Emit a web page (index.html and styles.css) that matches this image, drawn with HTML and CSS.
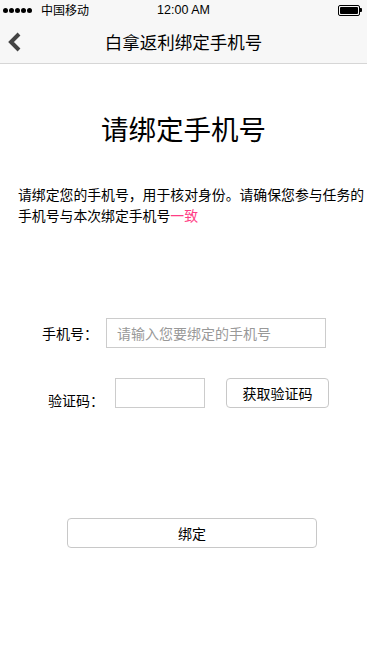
FILE: index.html
```html
<!DOCTYPE html>
<html lang="zh-CN">
<head>
    <meta charset="UTF-8">
    <meta name="viewport" content="width=device-width, initial-scale=1.0">
    <title>白拿返利绑定手机号</title>
    <link rel="stylesheet" href="styles.css">
</head>
<body>

    <div class="status-bar">
        <div class="status-left">
            <span class="signal">
                <i></i><i></i><i></i><i></i><i></i>
            </span>
            <span class="carrier">中国移动</span>
        </div>
        <div class="status-time">12:00 AM</div>
        <div class="status-right">
            <span class="battery"><span class="battery-level"></span></span>
            <span class="battery-tip"></span>
        </div>
    </div>

    <header class="nav">
        <a class="nav-back" href="#">
            <svg width="16" height="20" viewBox="0 0 16 20">
                <path d="M12 2 L4 10 L12 18" fill="none" stroke="#444" stroke-width="4" stroke-linejoin="miter"/>
            </svg>
        </a>
        <h2 class="nav-title">白拿返利绑定手机号</h2>
    </header>

    <main class="content">
        <h1 class="page-title">请绑定手机号</h1>
        <div class="intro">
            <span class="intro-line">请绑定您的手机号，用于核对身份。请确保您参与任务的</span>
            <span class="intro-line"><span>手机号与本次绑定手机号</span><span class="hl">一致</span></span>
        </div>

        <div class="form-row row-phone">
            <label class="form-label">手机号：</label>
            <input class="form-input input-phone" type="text" placeholder="请输入您要绑定的手机号">
        </div>

        <div class="form-row row-code">
            <label class="form-label label-code">验证码：</label>
            <input class="form-input input-code" type="text">
            <button class="btn btn-code">获取验证码</button>
        </div>

        <div class="bind-wrap">
            <button class="btn btn-bind">绑定</button>
        </div>
    </main>

</body>
</html>
```

FILE: styles.css
```css
body {
    margin: 0;
    background: #fff;
    color: #000;
    font-family: "Noto Sans CJK SC", "Liberation Sans", sans-serif;
    width: 367px;
    height: 652px;
    overflow: hidden;
}

/* Статус бар */
.status-bar {
    height: 20px;
    background: #f7f7f7;
    display: flex;
    align-items: center;
    justify-content: space-between;
    padding: 0 5px 0 3px;
    position: relative;
    font-size: 12px;
}

.status-left {
    display: flex;
    align-items: center;
}

.signal {
    display: flex;
    gap: 1px;
}

.signal i {
    display: block;
    width: 5px;
    height: 5px;
    border-radius: 50%;
    background: #000;
}

.carrier {
    margin-left: 9px;
    line-height: 20px;
}

.status-time {
    position: absolute;
    left: 0;
    right: 0;
    text-align: center;
    font-family: "Liberation Sans", Arial, sans-serif;
    font-size: 12.5px;
    line-height: 20px;
    pointer-events: none;
}

.status-right {
    display: flex;
    align-items: center;
}

.battery {
    width: 18px;
    height: 7px;
    border: 1px solid #000;
    border-radius: 2px;
    padding: 1px;
    display: flex;
}

.battery-level {
    flex: 1;
    background: #000;
    border-radius: 1px;
}

.battery-tip {
    width: 2px;
    height: 4px;
    background: #000;
    border-radius: 0 1px 1px 0;
}

/* Навбар */
.nav {
    height: 43px;
    background: #f7f7f7;
    border-bottom: 1px solid #d6d6d6;
    display: flex;
    align-items: center;
    justify-content: center;
    position: relative;
}

.nav-back {
    position: absolute;
    left: 7px;
    top: 12px;
    display: block;
    line-height: 0;
}

.nav-title {
    margin: 0;
    font-size: 17.5px;
    font-weight: normal;
    color: #000;
}

/* Контент */
.content {
    display: flex;
    flex-direction: column;
}

.page-title {
    margin: 46px 0 0;
    text-align: center;
    font-size: 27.5px;
    font-weight: normal;
    line-height: 36px;
}

.intro {
    margin: 38px 0 0;
    padding-left: 18px;
    font-size: 13.85px;
    line-height: 21px;
}

.intro-line {
    display: block;
    white-space: nowrap;
}

.hl {
    color: #ff3e86;
}

.form-row {
    display: flex;
    align-items: center;
    height: 30px;
}

.form-label {
    font-size: 14px;
    line-height: 20px;
    width: 56px;
}

.form-input {
    box-sizing: border-box;
    height: 30px;
    border: 1px solid #ccc;
    padding: 0 10px;
    font-family: inherit;
    font-size: 14px;
    color: #000;
    outline: none;
}

.form-input::placeholder {
    color: #999;
}

.row-phone {
    margin-top: 92px;
    padding-left: 42px;
}

.input-phone {
    margin-left: 8px;
    width: 220px;
}

.row-code {
    margin-top: 30px;
    padding-left: 48px;
}

.label-code {
    align-self: flex-end;
    margin-bottom: -2px;
}

.input-code {
    margin-left: 11px;
    width: 90px;
}

.btn {
    box-sizing: border-box;
    background: #fff;
    border: 1px solid #c8c8c8;
    border-radius: 4px;
    font-family: inherit;
    font-size: 14px;
    color: #000;
    cursor: pointer;
    padding: 0;
}

.btn-code {
    margin-left: 21px;
    width: 103px;
    height: 30px;
}

.bind-wrap {
    margin-top: 110px;
    padding-left: 67px;
}

.btn-bind {
    width: 250px;
    height: 30px;
}
```
